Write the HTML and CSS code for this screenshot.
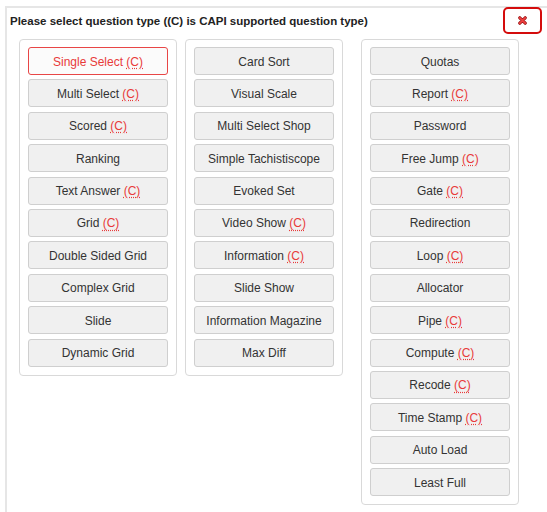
FILE: index.html
```html
<!DOCTYPE html>
<html>
<head>
<meta charset="utf-8">
<link rel="stylesheet" href="styles.css">
</head>
<body>
<div class="panel">
  <div class="title">Please select question type ((C) is CAPI supported question type)</div>
  <button class="close" aria-label="close">
    <svg width="9" height="9" viewBox="0 0 10 10"><path d="M2 2 L8 8 M8 2 L2 8" stroke="#9a1616" stroke-width="3.6" stroke-linecap="round"/><path d="M2 2 L8 8 M8 2 L2 8" stroke="#ef4040" stroke-width="2" stroke-linecap="round"/></svg>
  </button>
  <div class="cols">
    <div class="col col1">
      <div class="btn selected">Single Select <abbr>(C)</abbr></div>
      <div class="btn">Multi Select <abbr>(C)</abbr></div>
      <div class="btn">Scored <abbr>(C)</abbr></div>
      <div class="btn">Ranking</div>
      <div class="btn">Text Answer <abbr>(C)</abbr></div>
      <div class="btn">Grid <abbr>(C)</abbr></div>
      <div class="btn">Double Sided Grid</div>
      <div class="btn">Complex Grid</div>
      <div class="btn">Slide</div>
      <div class="btn">Dynamic Grid</div>
    </div>
    <div class="col col2">
      <div class="btn">Card Sort</div>
      <div class="btn">Visual Scale</div>
      <div class="btn">Multi Select Shop</div>
      <div class="btn">Simple Tachistiscope</div>
      <div class="btn">Evoked Set</div>
      <div class="btn">Video Show <abbr>(C)</abbr></div>
      <div class="btn">Information <abbr>(C)</abbr></div>
      <div class="btn">Slide Show</div>
      <div class="btn">Information Magazine</div>
      <div class="btn">Max Diff</div>
    </div>
    <div class="col col3">
      <div class="btn">Quotas</div>
      <div class="btn">Report <abbr>(C)</abbr></div>
      <div class="btn">Password</div>
      <div class="btn">Free Jump <abbr>(C)</abbr></div>
      <div class="btn">Gate <abbr>(C)</abbr></div>
      <div class="btn">Redirection</div>
      <div class="btn">Loop <abbr>(C)</abbr></div>
      <div class="btn">Allocator</div>
      <div class="btn">Pipe <abbr>(C)</abbr></div>
      <div class="btn">Compute <abbr>(C)</abbr></div>
      <div class="btn">Recode <abbr>(C)</abbr></div>
      <div class="btn">Time Stamp <abbr>(C)</abbr></div>
      <div class="btn">Auto Load</div>
      <div class="btn">Least Full</div>
    </div>
  </div>
</div>
</body>
</html>
```
FILE: styles.css
```css
html, body {
  margin: 0;
  padding: 0;
  background: #fff;
  font-family: "Liberation Sans", Arial, sans-serif;
  color: #333;
}
.panel {
  position: relative;
  margin: 6px 0 0 5px;
  width: 542px;
  height: 506px;
  border-left: 2px solid #e6e6e6;
  border-top: 2px solid #e6e6e6;
  box-sizing: border-box;
  padding: 6px 0 0 3px;
}
.title {
  font-weight: bold;
  font-size: 11.5px;
  line-height: 15px;
  color: #222;
}
.close {
  position: absolute;
  left: 496px;
  top: -1px;
  width: 39px;
  height: 27px;
  box-sizing: border-box;
  border: 2px solid #d40c0c;
  border-radius: 5px;
  background: #fff;
  padding: 0;
  display: flex;
  align-items: center;
  justify-content: center;
}
.cols {
  display: flex;
  align-items: flex-start;
  margin-top: 10px;
  margin-left: 9px;
}
.col {
  width: 158px;
  box-sizing: border-box;
  border: 1px solid #d9d9d9;
  border-radius: 4px;
  padding: 7px 8px 8px 8px;
  display: flex;
  flex-direction: column;
  gap: 4.4px;
}
.col2 { margin-left: 8px; }
.col3 { margin-left: 18px; }
.btn {
  height: 28px;
  box-sizing: border-box;
  border: 1px solid #cfcfcf;
  border-radius: 3px;
  background: #f0f0f0;
  display: flex;
  align-items: center;
  justify-content: center;
  padding-top: 1px;
  font-size: 12px;
  color: #333;
  white-space: pre;
}
.btn abbr {
  color: #e83a3a;
  text-decoration: underline dotted #e83a3a;
  text-underline-offset: 2px;
}
.btn.selected {
  border-color: #e84646;
  background: #fbfbfb;
  color: #e83a3a;
}
```
